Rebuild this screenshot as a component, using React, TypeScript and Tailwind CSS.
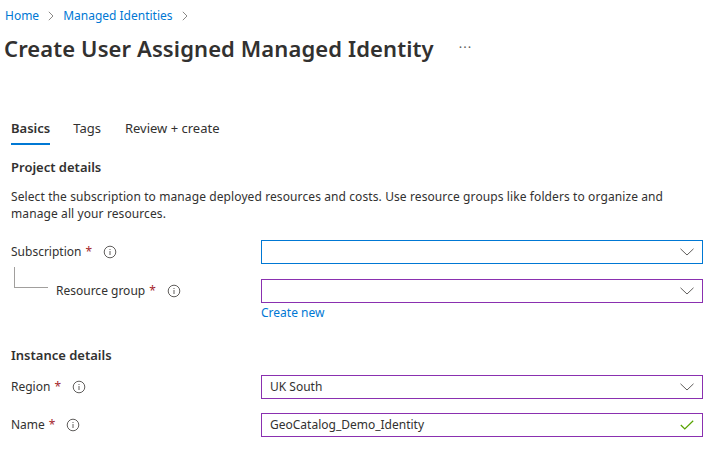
import React from "react";

const Info = () => (
  <svg width="14" height="14" viewBox="0 0 14 14" className="shrink-0">
    <circle cx="7" cy="7" r="5.8" fill="none" stroke="#605e5c" strokeWidth="1" />
    <rect x="6.5" y="6" width="1" height="4" fill="#605e5c" />
    <rect x="6.5" y="4" width="1" height="1" fill="#605e5c" />
  </svg>
);

const Chevron = () => (
  <svg width="14" height="8" viewBox="0 0 14 8" className="shrink-0">
    <path d="M0.5 0.8 L7 7 L13.5 0.8" fill="none" stroke="#605e5c" strokeWidth="1" />
  </svg>
);

const Check = () => (
  <svg width="14" height="10" viewBox="0 0 14 10" className="shrink-0">
    <path d="M0.8 5 L4.8 9 L13.2 0.8" fill="none" stroke="#57a300" strokeWidth="1.2" />
  </svg>
);

const Crumb = () => (
  <svg width="6" height="10" viewBox="0 0 6 10" className="mx-[9px] shrink-0">
    <path d="M0.8 0.8 L5 5 L0.8 9.2" fill="none" stroke="#8a8886" strokeWidth="1" />
  </svg>
);

const Label = ({ text }: { text: string }) => (
  <div className="flex items-center">
    <span>{text}</span>
    <span className="ml-[4px] text-[#a4262c]">*</span>
    <span className="ml-[11px] flex"><Info /></span>
  </div>
);

export default function App() {
  return (
    <div className="min-h-[467px] w-[719px] bg-white text-[#323130] font-['Segoe_UI','Noto_Sans',sans-serif] text-[12px] overflow-hidden">
      {/* breadcrumb */}
      <div className="pl-[5px] pt-[6px] flex items-center leading-5 text-[12px]">
        <span className="text-[#0078d4]">Home</span>
        <Crumb />
        <span className="text-[#0078d4]">Managed Identities</span>
        <Crumb />
      </div>
      {/* title */}
      <div className="pl-[4px] mt-[6px] flex items-center h-8">
        <h1 className="text-[22px] tracking-[0.1px] leading-8 font-semibold text-[#323130]">Create User Assigned Managed Identity</h1>
        <span className="ml-[25px] text-[#605e5c] text-[13px] tracking-[1px]">···</span>
      </div>
      {/* tabs */}
      <div className="pl-[11px] mt-[54px] flex text-[13px] leading-5">
        <div className="flex flex-col">
          <span className="font-semibold">Basics</span>
          <div className="mt-[5px] h-[2px] bg-[#0078d4]" />
        </div>
        <span className="ml-[23px]">Tags</span>
        <span className="ml-[24px]">Review + create</span>
      </div>
      {/* form */}
      <div className="pl-[11px] pr-[16px]">
        <div className="mt-[12px] text-[13px] leading-5 font-semibold">Project details</div>
        <div className="mt-[11px] leading-[17px] w-[680px] tracking-[0.1px]">
          Select the subscription to manage deployed resources and costs. Use resource groups like folders to organize and manage all your resources.
        </div>
        <div className="mt-[18px] flex items-center">
          <div className="w-[250px]"><Label text="Subscription" /></div>
          <div className="flex-1 h-6 border border-[#0078d4] flex items-center justify-end pr-[8px]">
            <Chevron />
          </div>
        </div>
        <div className="relative mt-[15px] flex items-center">
          <div className="absolute left-[3px] top-[-12px] w-[34px] h-[21px] border-l border-b border-[#a19f9d]" />
          <div className="w-[250px] pl-[45px]"><Label text="Resource group" /></div>
          <div className="flex-1 h-6 border border-[#8a30b0] flex items-center justify-end pr-[8px]">
            <Chevron />
          </div>
        </div>
        <div className="flex">
          <div className="w-[250px]" />
          <span className="mt-[1px] leading-[17px] text-[#0078d4]">Create new</span>
        </div>
        <div className="mt-[24px] text-[13px] leading-5 font-semibold">Instance details</div>
        <div className="mt-[10px] flex items-center">
          <div className="w-[250px]"><Label text="Region" /></div>
          <div className="flex-1 h-6 border border-[#8a30b0] flex items-center justify-between pl-[8px] pr-[8px]">
            <span>UK South</span>
            <Chevron />
          </div>
        </div>
        <div className="mt-[14px] flex items-center">
          <div className="w-[250px]"><Label text="Name" /></div>
          <div className="flex-1 h-6 border border-[#8a30b0] flex items-center justify-between pl-[8px] pr-[8px]">
            <span>GeoCatalog_Demo_Identity</span>
            <Check />
          </div>
        </div>
      </div>
    </div>
  );
}
